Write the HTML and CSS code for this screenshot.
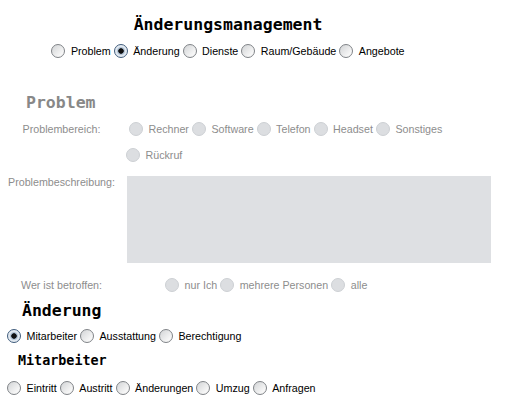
FILE: index.html
```html
<!DOCTYPE html>
<html lang="de">
<head>
    <meta charset="UTF-8">
    <title>Änderungsmanagement</title>
    <link rel="stylesheet" href="styles.css">
</head>
<body>
    <div class="page">
        <!-- Kopf: Titel und Bereichsauswahl -->
        <header class="top">
            <h1>Änderungsmanagement</h1>
            <div class="choices">
                <label class="opt"><input type="radio" name="bereich"> Problem</label>
                <label class="opt"><input type="radio" name="bereich" checked> Änderung</label>
                <label class="opt"><input type="radio" name="bereich"> Dienste</label>
                <label class="opt"><input type="radio" name="bereich"> Raum/Gebäude</label>
                <label class="opt"><input type="radio" name="bereich"> Angebote</label>
            </div>
        </header>

        <!-- Problem (inaktiv) -->
        <section class="problem">
            <h2>Problem</h2>
            <div class="field field-first">
                <div class="field-label">Problembereich:</div>
                <div class="field-value choices wrap">
                    <label class="opt"><input type="radio" name="pb" disabled> Rechner</label>
                    <label class="opt"><input type="radio" name="pb" disabled> Software</label>
                    <label class="opt"><input type="radio" name="pb" disabled> Telefon</label>
                    <label class="opt"><input type="radio" name="pb" disabled> Headset</label>
                    <label class="opt"><input type="radio" name="pb" disabled> Sonstiges</label>
                    <label class="opt"><input type="radio" name="pb" disabled> Rückruf</label>
                </div>
            </div>
            <div class="field field-text">
                <div class="field-label top-label">Problembeschreibung:</div>
                <div class="field-value">
                    <textarea disabled></textarea>
                </div>
            </div>
            <div class="field field-who">
                <div class="field-label">Wer ist betroffen:</div>
                <div class="field-value choices indent">
                    <label class="opt"><input type="radio" name="wer" disabled> nur Ich</label>
                    <label class="opt"><input type="radio" name="wer" disabled> mehrere Personen</label>
                    <label class="opt"><input type="radio" name="wer" disabled> alle</label>
                </div>
            </div>
        </section>

        <!-- Änderung -->
        <section class="change">
            <h2>Änderung</h2>
            <div class="choices row-left">
                <label class="opt"><input type="radio" name="art" checked> Mitarbeiter</label>
                <label class="opt"><input type="radio" name="art"> Ausstattung</label>
                <label class="opt"><input type="radio" name="art"> Berechtigung</label>
            </div>
            <h3>Mitarbeiter</h3>
            <div class="choices row-left last">
                <label class="opt"><input type="radio" name="ma"> Eintritt</label>
                <label class="opt"><input type="radio" name="ma"> Austritt</label>
                <label class="opt"><input type="radio" name="ma"> Änderungen</label>
                <label class="opt"><input type="radio" name="ma"> Umzug</label>
                <label class="opt"><input type="radio" name="ma"> Anfragen</label>
            </div>
        </section>
    </div>
</body>
</html>
```

FILE: styles.css
```css
* {
    box-sizing: border-box;
    margin: 0;
    padding: 0;
}

body {
    font-family: 'Liberation Sans', Arial, sans-serif;
    font-size: 10.7px;
    color: #000;
    background: #fff;
}

.page {
    padding-top: 15px;
}

h1,
h2,
h3 {
    font-family: 'DejaVu Sans Mono', monospace;
    font-weight: bold;
}

h1 {
    font-size: 16.5px;
    line-height: 19px;
}

h2 {
    font-size: 16.5px;
    line-height: 19px;
}

h3 {
    font-size: 13.4px;
    line-height: 16px;
    margin-top: 7px;
    padding-left: 18px;
}

.top {
    width: 456px;
    text-align: center;
}

.choices {
    display: flex;
    align-items: center;
    column-gap: 3px;
}

.top .choices {
    justify-content: center;
    margin-top: 7px;
}

.choices.wrap {
    flex-wrap: wrap;
    row-gap: 6px;
}

.opt {
    display: flex;
    align-items: center;
    height: 20px;
    white-space: nowrap;
}

.opt input {
    appearance: none;
    -webkit-appearance: none;
    flex: none;
    width: 14px;
    height: 14px;
    margin: 0 5.5px 0 0;
    border-radius: 50%;
    border: 1px solid #7f8387;
    background: linear-gradient(135deg, #d2d4d6, #f6f6f6 75%);
}

.opt input:checked {
    border-color: #3f5c7c;
    background: radial-gradient(circle, #111 0 2.4px, #9fb3c8 3px, #dfe7ef 4.5px, #f5f7fa 100%);
}

.opt input:disabled {
    border-color: #cdd0d4;
    background: #dcdee1;
}

/* Problem: ganzer Block ausgegraut */
.problem {
    margin-top: 32px;
    color: #8d8d8d;
}

.problem h2 {
    padding-left: 26px;
    color: #888;
}

.field {
    display: flex;
}

.field-first {
    margin-top: 7px;
}

.field-text {
    margin-top: 11px;
}

.field-who {
    margin-top: 12px;
}

.field-label {
    flex: 0 0 107px;
    min-width: 0;
    margin-left: 8px;
    text-align: center;
    line-height: 20px;
    white-space: nowrap;
}

.field-label.top-label {
    line-height: 13px;
}

.field-value {
    width: 365px;
    margin-left: 11px;
}

.field-first .field-value .opt:first-child {
    margin-left: 3px;
}

.field-value.indent {
    padding-left: 39px;
}

textarea {
    display: block;
    width: 364px;
    height: 87px;
    margin-left: 1px;
    border: none;
    background: #dee0e3;
    resize: none;
}

/* Änderung */
.change {
    margin-top: 6px;
}

.change h2 {
    padding-left: 22px;
}

.row-left {
    margin-top: 6px;
    padding-left: 7px;
}

.row-left.last {
    margin-top: 9px;
}
```
